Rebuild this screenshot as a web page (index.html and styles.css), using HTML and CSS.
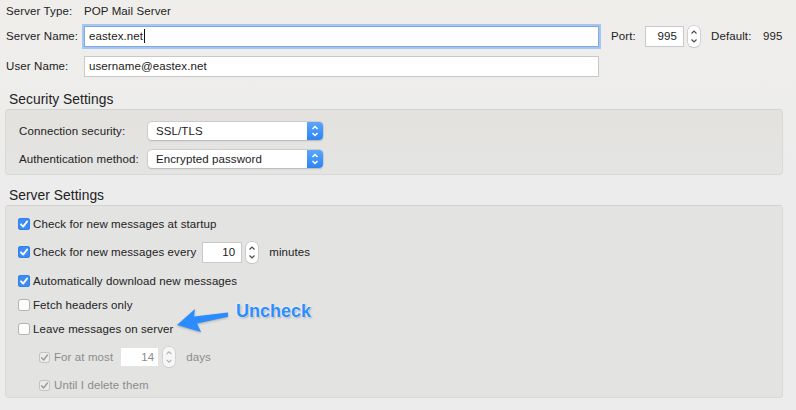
FILE: index.html
```html
<!DOCTYPE html>
<html>
<head>
<meta charset="utf-8">
<link rel="stylesheet" href="styles.css">
</head>
<body>
<div class="page">
  <div class="general">
    <div class="row r1"><span class="lbl">Server Type:</span><span>POP Mail Server</span></div>
    <div class="row r2">
      <span class="lbl">Server Name:</span>
      <div class="field wide focus">eastex.net<span class="caret"></span></div>
      <span class="port-lbl">Port:</span>
      <div class="field num port">995</div>
      <div class="stepper"><svg viewBox="0 0 12 21" width="12" height="21"><path d="M3.5 7.5 L6 5 L8.5 7.5 M3.5 13.5 L6 16 L8.5 13.5" fill="none" stroke="#4a4a4a" stroke-width="1.2"/></svg></div>
      <span class="def-lbl">Default:</span>
      <span>995</span>
    </div>
    <div class="row r3"><span class="lbl">User Name:</span><div class="field wide">username@eastex.net</div></div>
  </div>

  <div class="group-title">Security Settings</div>
  <div class="box sec">
    <div class="srow"><span class="slbl">Connection security:</span><div class="select"><span class="sval">SSL/TLS</span><span class="sbtn"><svg viewBox="0 0 16 18" width="16" height="18"><path d="M5.5 7 L8 4.5 L10.5 7 M5.5 11 L8 13.5 L10.5 11" fill="none" stroke="#fff" stroke-width="1.5"/></svg></span></div></div>
    <div class="srow"><span class="slbl">Authentication method:</span><div class="select"><span class="sval">Encrypted password</span><span class="sbtn"><svg viewBox="0 0 16 18" width="16" height="18"><path d="M5.5 7 L8 4.5 L10.5 7 M5.5 11 L8 13.5 L10.5 11" fill="none" stroke="#fff" stroke-width="1.5"/></svg></span></div></div>
  </div>

  <div class="group-title second">Server Settings</div>
  <div class="box srv">
    <div class="crow c1"><span class="cb on"><svg viewBox="0 0 12 12" width="12" height="12"><path d="M3 6.3 L5.1 8.6 L9.2 3.4" fill="none" stroke="#fff" stroke-width="1.8" stroke-linecap="round" stroke-linejoin="round"/></svg></span><span>Check for new messages at startup</span></div>
    <div class="crow c2"><span class="cb on"><svg viewBox="0 0 12 12" width="12" height="12"><path d="M3 6.3 L5.1 8.6 L9.2 3.4" fill="none" stroke="#fff" stroke-width="1.8" stroke-linecap="round" stroke-linejoin="round"/></svg></span><span>Check for new messages every</span>
      <div class="field num mins">10</div>
      <div class="stepper"><svg viewBox="0 0 12 21" width="12" height="21"><path d="M3.5 7.5 L6 5 L8.5 7.5 M3.5 13.5 L6 16 L8.5 13.5" fill="none" stroke="#4a4a4a" stroke-width="1.2"/></svg></div>
      <span class="unit">minutes</span>
    </div>
    <div class="crow c3"><span class="cb on"><svg viewBox="0 0 12 12" width="12" height="12"><path d="M3 6.3 L5.1 8.6 L9.2 3.4" fill="none" stroke="#fff" stroke-width="1.8" stroke-linecap="round" stroke-linejoin="round"/></svg></span><span>Automatically download new messages</span></div>
    <div class="crow c4"><span class="cb"></span><span>Fetch headers only</span></div>
    <div class="crow c5"><span class="cb"></span><span>Leave messages on server</span></div>
    <div class="crow c6 dis"><span class="cb dcb"><svg viewBox="0 0 11 11" width="11" height="11"><path d="M2.6 5.8 L4.6 8 L8.4 3" fill="none" stroke="#9a9a9a" stroke-width="1.4" stroke-linecap="round" stroke-linejoin="round"/></svg></span><span>For at most</span>
      <div class="field num days-f">14</div>
      <div class="stepper dstep"><svg viewBox="0 0 12 21" width="12" height="21"><path d="M3.5 7.5 L6 5 L8.5 7.5 M3.5 13.5 L6 16 L8.5 13.5" fill="none" stroke="#9a9a9a" stroke-width="1.2"/></svg></div>
      <span class="unit">days</span>
    </div>
    <div class="crow c7 dis"><span class="cb dcb"><svg viewBox="0 0 11 11" width="11" height="11"><path d="M2.6 5.8 L4.6 8 L8.4 3" fill="none" stroke="#9a9a9a" stroke-width="1.4" stroke-linecap="round" stroke-linejoin="round"/></svg></span><span>Until I delete them</span></div>

    <svg class="arrow" viewBox="0 0 70 40" width="70" height="40"><path d="M7 25 L25 9 L24 16.5 L58 12.5 L58 16.8 L27 23.5 L31 32 Z" fill="#2a8cff"/></svg>
    <div class="note">Uncheck</div>
  </div>
</div>
</body>
</html>
```

FILE: styles.css
```css
* { box-sizing: border-box; }
html, body { margin: 0; padding: 0; }
body {
  width: 796px;
  height: 410px;
  overflow: hidden;
  background: #ececec;
  font-family: "Liberation Sans", Arial, sans-serif;
  font-size: 11.5px;
  letter-spacing: 0.1px;
  color: #222;
}
.page {
  padding: 0 13px 0 5px;
  background: linear-gradient(#efeeeb, #ececec 180px);
  height: 410px;
}
.general { padding-left: 1px; }
.row { display: flex; align-items: center; }
.r1 { height: 22px; }
.r2 { height: 22px; margin-top: 3px; }
.r3 { height: 22px; margin-top: 8px; }
.lbl { width: 78px; flex: none; }
.field {
  background: #fff;
  border: 1px solid #c9c9c9;
  height: 21px;
  display: flex;
  align-items: center;
  padding: 0 4px;
  color: #1a1a1a;
}
.wide { width: 515px; }
.focus {
  border-color: #7fa9e4;
  box-shadow: 0 0 0 2px #a6c6f2;
}
.caret {
  display: inline-block;
  width: 1px;
  height: 14px;
  background: #111;
  margin-left: 1px;
}
.num { justify-content: flex-end; padding-right: 6px; }
.port-lbl { margin-left: 12px; width: 34px; }
.port { width: 39px; }
.stepper {
  width: 12px;
  height: 21px;
  margin-left: 4px;
  background: #fff;
  border-radius: 5px;
  box-shadow: 0 0 0 0.5px #b8b8b8, 0 0.5px 1px rgba(0,0,0,0.15);
  display: flex;
}
.def-lbl { margin-left: 11px; width: 52px; }

.group-title {
  font-size: 13.8px;
  letter-spacing: 0.05px;
  line-height: 15px;
  padding: 0 0 2px 4px;
  margin-top: 15px;
  color: #222;
}
.group-title.second { margin-top: 13px; }
.box {
  background: #e3e3e2;
  border: 1px solid #d9d9d8;
  border-top-color: #d2d2d1;
  border-radius: 4px;
  position: relative;
}
.sec {
  background: linear-gradient(#e3e2de, #e4e4e3);
  padding: 12px 0 6px 13px;
  display: flex;
  flex-direction: column;
  gap: 10px;
  height: 66px;
}
.srow { display: flex; align-items: center; height: 18px; }
.slbl { width: 129px; flex: none; }
.select {
  width: 175px;
  height: 18px;
  background: #fff;
  border-radius: 4px;
  box-shadow: 0 0 0 0.5px #bdbdbd, 0 0.5px 1.5px rgba(0,0,0,0.2);
  display: flex;
  align-items: center;
  overflow: hidden;
}
.sval { flex: 1; padding-left: 8px; color: #1a1a1a; }
.sbtn {
  width: 16px;
  height: 18px;
  background: linear-gradient(#5aa6fb, #2f83f5);
  display: flex;
}

.srv {
  height: 193px;
  padding: 10px 0 0 12px;
  display: flex;
  flex-direction: column;
}
.crow { display: flex; align-items: center; height: 16px; }
.c2 { height: 22px; margin-top: 9px; }
.c3 { margin-top: 10px; }
.c4 { margin-top: 8px; }
.c5 { margin-top: 8px; }
.c6 { height: 20px; margin-top: 10px; }
.c7 { margin-top: 10px; }
.cb {
  width: 12px;
  height: 12px;
  flex: none;
  border-radius: 3px;
  background: #fff;
  box-shadow: inset 0 0 0 1px #b3b3b3;
  margin-right: 3px;
  display: flex;
}
.cb.on { background: #3b8cf6; box-shadow: inset 0 0 0 1px #3380ea; }
.dis { padding-left: 21px; color: #8c8c8c; }
.dcb {
  width: 11px;
  height: 11px;
  background: #ececec;
  box-shadow: inset 0 0 0 1px #c4c4c4;
  margin-right: 4px;
}
.mins { width: 40px; margin-left: 6px; }
.unit { margin-left: 11px; }
.days-f {
  width: 37px;
  height: 18px;
  margin-left: 8px;
  border: none;
  color: #8c8c8c;
  padding-right: 4px;
}
.dstep { height: 20px; margin-left: 5px; opacity: 0.7; }
.dstep svg { height: 20px; }

.arrow {
  position: absolute;
  left: 164px;
  top: 94px;
  filter: drop-shadow(0 1px 1px rgba(0,0,0,0.25));
}
.note {
  position: absolute;
  left: 230px;
  top: 95px;
  font-family: "Liberation Sans", Arial, sans-serif;
  font-weight: bold;
  font-size: 18px;
  line-height: 20px;
  letter-spacing: 0;
  color: #2a8cff;
  text-shadow: 0 0 1px #fff, 0 0 1px #fff, 0 0 2px #fff, 1px 1px 2px rgba(0,0,0,0.35);
}
```
